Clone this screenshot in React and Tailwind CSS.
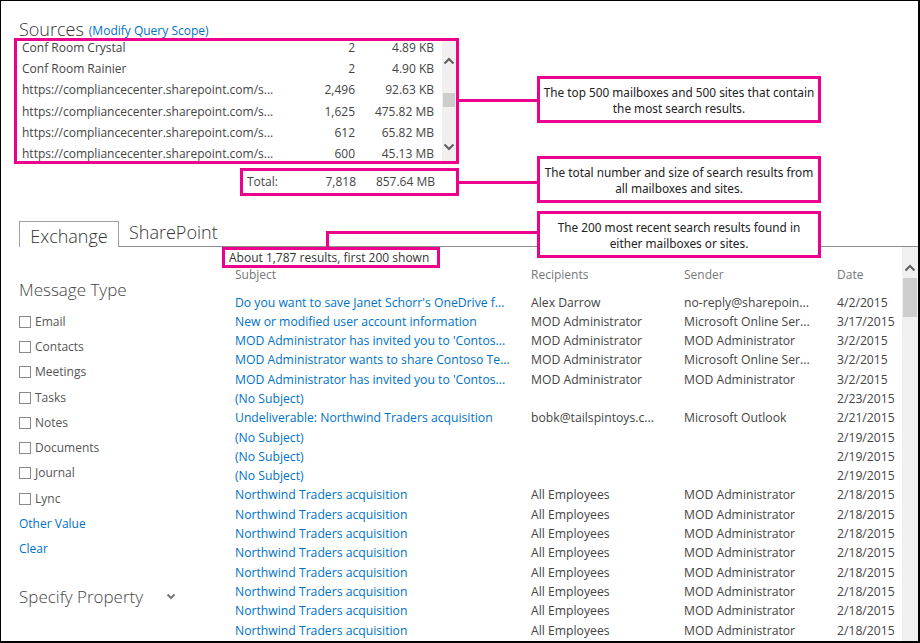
import React from "react";

const font = { fontFamily: '"Open Sans", "Noto Sans", sans-serif' };

const sources = [
  { name: "Conf Room Crystal", count: "2", size: "4.89 KB" },
  { name: "Conf Room Rainier", count: "2", size: "4.90 KB" },
  { name: "https://compliancecenter.sharepoint.com/s...", count: "2,496", size: "92.63 KB" },
  { name: "https://compliancecenter.sharepoint.com/s...", count: "1,625", size: "475.82 MB" },
  { name: "https://compliancecenter.sharepoint.com/s...", count: "612", size: "65.82 MB" },
  { name: "https://compliancecenter.sharepoint.com/s...", count: "600", size: "45.13 MB" },
];

const northwind = {
  subject: "Northwind Traders acquisition",
  to: "All Employees",
  from: "MOD Administrator",
  date: "2/18/2015",
};

const results = [
  { subject: "Do you want to save Janet Schorr's OneDrive f...", to: "Alex Darrow", from: "no-reply@sharepoin...", date: "4/2/2015" },
  { subject: "New or modified user account information", to: "MOD Administrator", from: "Microsoft Online Ser...", date: "3/17/2015" },
  { subject: "MOD Administrator has invited you to 'Contos...", to: "MOD Administrator", from: "MOD Administrator", date: "3/2/2015" },
  { subject: "MOD Administrator wants to share Contoso Te...", to: "MOD Administrator", from: "Microsoft Online Ser...", date: "3/2/2015" },
  { subject: "MOD Administrator has invited you to 'Contos...", to: "MOD Administrator", from: "MOD Administrator", date: "3/2/2015" },
  { subject: "(No Subject)", to: "", from: "", date: "2/23/2015" },
  { subject: "Undeliverable: Northwind Traders acquisition", to: "bobk@tailspintoys.c...", from: "Microsoft Outlook", date: "2/21/2015" },
  { subject: "(No Subject)", to: "", from: "", date: "2/19/2015" },
  { subject: "(No Subject)", to: "", from: "", date: "2/19/2015" },
  { subject: "(No Subject)", to: "", from: "", date: "2/19/2015" },
  northwind, northwind, northwind, northwind, northwind, northwind, northwind, northwind,
];

const messageTypes = ["Email", "Contacts", "Meetings", "Tasks", "Notes", "Documents", "Journal", "Lync"];

const ChevronUp = ({ className }) => (
  <svg width="12" height="8" viewBox="0 0 12 8" className={className}>
    <polyline points="1.5,6.5 6,2 10.5,6.5" fill="none" stroke="#5f5f5f" strokeWidth="2" />
  </svg>
);

const ChevronDown = ({ className }) => (
  <svg width="12" height="8" viewBox="0 0 12 8" className={className}>
    <polyline points="1.5,1.5 6,6 10.5,1.5" fill="none" stroke="#5f5f5f" strokeWidth="2" />
  </svg>
);

const Callout = ({ className, children }) => (
  <div
    className={`absolute w-[284px] h-[47px] border-[3px] border-[#ec008c] bg-white flex items-center justify-center text-center text-[11.8px] leading-[16px] text-[#222] ${className}`}
    style={{ fontFamily: '"Noto Sans", "DejaVu Sans", sans-serif' }}
  >
    {children}
  </div>
);

export default function App() {
  return (
    <div
      className="relative w-[920px] h-[643px] bg-white border-t border-l border-r-2 border-b-2 border-black overflow-hidden flex flex-col text-[#444]"
      style={font}
    >
      {/* Sources */}
      <div className="pt-[16px] pl-[18px] h-[21px] box-content flex items-end gap-[5px]">
        <span className="text-[18px] font-light text-[#333] leading-[18px]">Sources</span>
        <a href="#" className="text-[12px] text-[#0072c6] leading-[15px]">(Modify Query Scope)</a>
      </div>

      <div className="ml-[13px] w-[445px] h-[126px] border-[3px] border-[#ec008c] flex overflow-hidden">
        <div className="flex-1 flex flex-col gap-[8.2px]">
          {sources.map((s, i) => (
            <div key={i} className="h-[13px] flex items-center text-[12px] leading-[13px] text-[#444]">
              <span className="pl-[5px] w-[262px] whitespace-nowrap">{s.name}</span>
              <span className="w-[76px] text-right">{s.count}</span>
              <span className="w-[79px] text-right">{s.size}</span>
            </div>
          ))}
        </div>
        <div className="w-[14px] bg-[#f0f0f0] flex flex-col items-center pt-[16px]">
          <ChevronUp />
          <div className="mt-[28px] w-[12px] h-[14px] bg-[#cdcdcd]" />
          <ChevronDown className="mt-[36px]" />
        </div>
      </div>

      <div className="ml-[239px] mt-[4px] w-[219px] h-[28px] border-[3px] border-[#ec008c] flex items-center text-[12px] text-[#444]">
        <span className="pl-[4px] w-[40px]">Total:</span>
        <span className="w-[73px] text-right">7,818</span>
        <span className="w-[79px] text-right">857.64 MB</span>
      </div>

      {/* Tabs */}
      <div className="mt-[25px] h-[26px] flex items-end">
        <div className="w-[18px] h-full" />
        <div className="w-[100px] h-full border-t border-l border-r border-[#a0a0a0] flex items-center justify-center pt-[3px] text-[18px] font-light text-[#333]">
          Exchange
        </div>
        <div className="flex-1 h-full border-b border-[#8c8c8c] pl-[10px] text-[18px] font-light text-[#333] leading-[23px]">
          SharePoint
        </div>
      </div>

      {/* Main */}
      <div className="flex flex-1 min-h-0">
        <aside className="w-[221px] pl-[18px] pt-[31px]">
          <div className="h-[24px] leading-[24px] text-[17px] font-light text-[#444]">Message Type</div>
          <div className="mt-[7px]">
            {messageTypes.map((t) => (
              <label key={t} className="h-[25.3px] flex items-center gap-[4px] text-[12px] text-[#555]">
                <span className="w-[12px] h-[12px] border border-[#8a8a8a] bg-white" />
                {t}
              </label>
            ))}
            <div className="h-[25.3px] flex items-center text-[12px] text-[#0072c6]">Other Value</div>
            <div className="h-[25.3px] flex items-center text-[12px] text-[#0072c6]">Clear</div>
          </div>
          <div className="mt-[23px] h-[24px] flex items-center">
            <span className="w-[147px] text-[17px] font-light text-[#444]">Specify Property</span>
            <svg width="10" height="7" viewBox="0 0 10 7">
              <polyline points="1.5,1.5 5,5 8.5,1.5" fill="none" stroke="#777" strokeWidth="2" />
            </svg>
          </div>
        </aside>

        <section className="flex-1 min-w-0">
          <div className="w-[218px] h-[21px] border-[3px] border-[#ec008c] bg-white flex items-center pl-[4px] text-[12px] text-[#333] whitespace-nowrap">
            About 1,787 results, first 200 shown
          </div>
          <div className="h-[14px] flex items-center pl-[13px] text-[12px] text-[#777]">
            <span className="w-[296px]">Subject</span>
            <span className="w-[153px]">Recipients</span>
            <span className="w-[153px]">Sender</span>
            <span>Date</span>
          </div>
          <div className="mt-[11px]">
            {results.map((r, i) => (
              <div key={i} className="h-[19.3px] flex items-center pl-[13px] text-[12.2px] whitespace-nowrap">
                <a href="#" className="w-[296px] text-[#0072c6]">{r.subject}</a>
                <span className="w-[153px] text-[#444]">{r.to}</span>
                <span className="w-[153px] text-[#444]">{r.from}</span>
                <span className="text-[#444]">{r.date}</span>
              </div>
            ))}
          </div>
        </section>

        <div className="w-[16px] bg-[#f0f0f0] flex flex-col items-center pt-[17px]">
          <ChevronUp />
          <div className="mt-[6px] w-[14px] h-[39px] bg-[#cdcdcd]" />
        </div>
      </div>

      {/* Callouts */}
      <div className="absolute left-[458px] top-[98px] w-[80px] h-[3px] bg-[#ec008c]" />
      <Callout className="left-[536px] top-[75px]">
        The top 500 mailboxes and 500 sites that contain
        <br />
        the most search results.
      </Callout>

      <div className="absolute left-[458px] top-[180px] w-[80px] h-[3px] bg-[#ec008c]" />
      <Callout className="left-[536px] top-[155px]">
        The total number and size of search results from
        <br />
        all mailboxes and sites.
      </Callout>

      <div className="absolute left-[325px] top-[230px] w-[212px] h-[3px] bg-[#ec008c]" />
      <div className="absolute left-[325px] top-[230px] w-[3px] h-[17px] bg-[#ec008c]" />
      <Callout className="left-[536px] top-[210px]">
        The 200 most recent search results found in
        <br />
        either mailboxes or sites.
      </Callout>
    </div>
  );
}
